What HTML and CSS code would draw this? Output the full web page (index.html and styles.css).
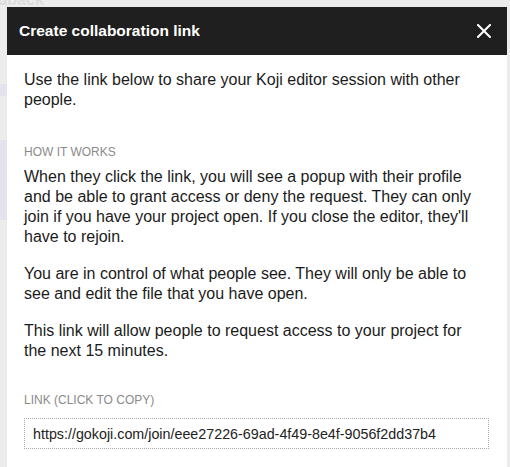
FILE: index.html
```html
<!DOCTYPE html>
<html lang="en">
<head>
    <meta charset="UTF-8">
    <meta name="viewport" content="width=device-width, initial-scale=1.0">
    <title>Create collaboration link</title>
    <link rel="stylesheet" href="styles.css">
</head>
<body>
    <div class="backdrop">
        <div class="backdrop-label">Feedback</div>
        <div class="backdrop-strip strip-a"></div>
        <div class="backdrop-strip strip-b"></div>
    </div>

    <div class="modal">
        <header class="modal-header">
            <h2>Create collaboration link</h2>
            <button class="close-btn" aria-label="Close">
                <svg width="14" height="14" viewBox="0 0 14 14">
                    <path d="M1 1 L13 13 M13 1 L1 13" stroke="#fff" stroke-width="2" stroke-linecap="square" fill="none"/>
                </svg>
            </button>
        </header>

        <div class="modal-body">
            <p class="intro">Use the link below to share your Koji editor session with other people.</p>

            <h3 class="section-label">How it works</h3>
            <p>When they click the link, you will see a popup with their profile and be able to grant access or deny the request. They can only join if you have your project open. If you close the editor, they'll have to rejoin.</p>
            <p>You are in control of what people see. They will only be able to see and edit the file that you have open.</p>
            <p>This link will allow people to request access to your project for the next 15 minutes.</p>

            <h3 class="section-label link-label">Link (click to copy)</h3>
            <div class="link-box" id="link-box">https://gokoji.com/join/eee27226-69ad-4f49-8e4f-9056f2dd37b4</div>
        </div>
    </div>
</body>
</html>
```

FILE: styles.css
```css
* {
    margin: 0;
    padding: 0;
    box-sizing: border-box;
}

body {
    font-family: 'Liberation Sans', Arial, Helvetica, sans-serif;
    color: #1b1b1b;
    background-color: #ececec;
    padding: 7px 3px 0 7px;
    height: 467px;
    overflow: hidden;
    position: relative;
}

/* faint page behind the overlay */
.backdrop {
    position: absolute;
    inset: 0;
    z-index: 0;
}

.backdrop-label {
    position: absolute;
    top: -9px;
    left: -30px;
    font-size: 16px;
    font-weight: bold;
    color: #dcdcdc;
}

.backdrop-strip {
    position: absolute;
    left: 0;
    width: 7px;
    background-color: #e3e3ec;
}

.strip-a {
    top: 84px;
    height: 12px;
}

.strip-b {
    top: 140px;
    height: 80px;
}

.modal {
    position: relative;
    z-index: 1;
    width: 500px;
    background-color: #fff;
}

.modal-header {
    display: flex;
    align-items: center;
    justify-content: space-between;
    height: 48px;
    padding: 0 16px 0 12px;
    background-color: #1f1f1f;
}

.modal-header h2 {
    color: #fff;
    font-size: 15.5px;
    font-weight: bold;
}

.close-btn {
    display: flex;
    background: none;
    border: none;
    cursor: pointer;
}

.modal-body {
    padding: 15px 18px 20px 17px;
}

.modal-body p {
    font-size: 16px;
    line-height: 20px;
    margin-bottom: 17px;
    padding-right: 10px;
}

.modal-body .intro {
    margin-bottom: 34px;
}

.section-label {
    font-size: 12px;
    font-weight: normal;
    line-height: 16px;
    text-transform: uppercase;
    color: #8a8a8a;
    margin-bottom: 7px;
}

.link-label {
    margin-top: 31px;
    margin-bottom: 10px;
}

.link-box {
    height: 31px;
    padding: 0 8px;
    display: flex;
    align-items: center;
    border: 1px dotted #a9a9a9;
    font-size: 14.3px;
    color: #222;
    cursor: pointer;
}
```
